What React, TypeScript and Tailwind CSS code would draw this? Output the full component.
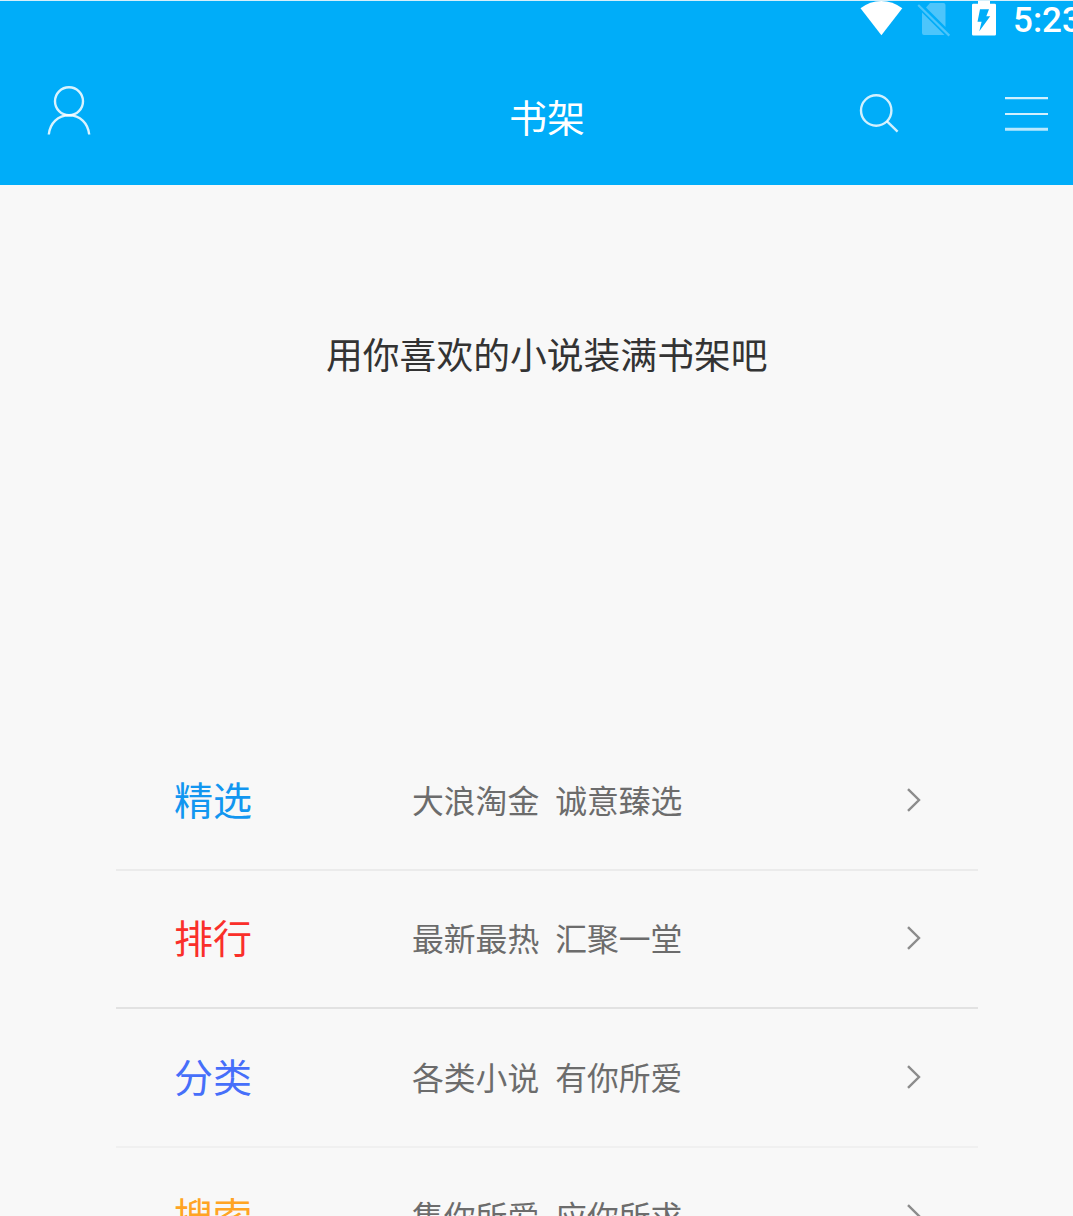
const rows = [
  { label: '精选', color: 'text-[#1296f0]', line: 'border-[#ebebeb]', words: ['大浪淘金', '诚意臻选'], h: 'h-[139px]' },
  { label: '排行', color: 'text-[#fa2f2a]', line: 'border-[#e2e2e2]', words: ['最新最热', '汇聚一堂'], h: 'h-[138px]' },
  { label: '分类', color: 'text-[#466ffa]', line: 'border-[#f0f0f0]', words: ['各类小说', '有你所爱'], h: 'h-[139px]' },
  { label: '搜索', color: 'text-[#ffa424]', line: 'border-[#ebebeb]', words: ['集你所爱', '应你所求'], h: 'h-[139px]' },
];

function StatusBar() {
  return (
    <div className="flex h-[38px] items-start overflow-hidden pl-[860px] font-['Roboto',sans-serif]">
      <svg className="h-[38px] w-[43px] shrink-0" viewBox="0 1 43 38" fill="#fff">
        <path d="M0.5 8.3Q10 1 21.3 1T42.3 8.3L21.4 35.3Z" />
      </svg>
      <svg className="ml-[14px] h-[38px] w-[34px] shrink-0" viewBox="0 1 34 38">
        <path d="M13 3H26.5Q28.5 3 28.5 5V27L9 7.5ZM5 12.5L27.5 35H7Q5 35 5 33Z" fill="#fff" fillOpacity=".3" />
        <path d="M1.2 5L32.3 35.6" stroke="#fff" strokeOpacity=".3" strokeWidth="2.2" />
      </svg>
      <svg className="ml-[20px] h-[38px] w-[26px] shrink-0" viewBox="0 1 26 38">
        <path d="M1 5Q1 3.8 2.2 3.8H7V1H19V3.8H23.8Q25 3.8 25 5V34.2Q25 35.4 23.8 35.4H2.2Q1 35.4 1 34.2Z" fill="#fff" />
        <path d="M9 9.2H18L15.3 16.3H19.2L8.3 31.2L10.6 21.8H6.5Z" fill="#00adf9" />
      </svg>
      <span className="ml-[16px] mt-[2px] shrink-0 whitespace-nowrap text-[35px] font-medium leading-[36px] text-white">5:23</span>
    </div>
  );
}

function Header() {
  return (
    <header className="h-[185px] overflow-hidden border-t border-[#d5effa] bg-[#00adf9]">
      <StatusBar />
      <div className="flex h-[146px] items-start pl-[46px]">
        <svg className="mt-[46px] h-[52px] w-[46px] shrink-0" viewBox="0 0 46 52" fill="none" stroke="#fff" strokeOpacity=".85" strokeWidth="2.4">
          <circle cx="23" cy="16.3" r="14" />
          <path d="M2.8 49.5C4 38 12 30.3 23 30.3S42 38 43.2 49.5" />
        </svg>
        <h1 className="ml-[417px] mt-[49px] shrink-0 text-[38px] font-normal leading-[56px] text-white">书架</h1>
        <svg className="ml-[274px] mt-[54px] h-[42px] w-[42px] shrink-0" viewBox="0 0 42 42" fill="none" stroke="#fff" strokeOpacity=".82" strokeWidth="2.4">
          <circle cx="17.2" cy="17.5" r="15.2" />
          <path d="M27.8 28.2L38.6 38.6" />
        </svg>
        <svg className="ml-[103px] mt-[54px] h-[42px] w-[46px] shrink-0" viewBox="0 0 46 42" stroke="#fff" strokeOpacity=".82">
          <path d="M1 5.2H44M1 21H44" strokeWidth="2.2" />
          <path d="M1 36.2H44" strokeWidth="3" strokeOpacity=".72" />
        </svg>
      </div>
    </header>
  );
}

export default function App() {
  return (
    <div className="h-[1216px] w-[1073px] overflow-hidden bg-[#f8f8f8] font-['Noto_Sans_CJK_SC',sans-serif]">
      <Header />
      <p className="flex h-[547px] items-start pl-[326px] pt-[141px] text-[36.8px] leading-[54px] text-[#333]">
        用你喜欢的小说装满书架吧
      </p>
      <ul className="ml-[116px] w-[862px]">
        {rows.map((row) => (
          <li key={row.label} className={`flex items-center border-b-2 pb-[2px] pl-[58px] ${row.h} ${row.line}`}>
            <span className={`w-[238px] pb-[4px] text-[39px] leading-[56px] ${row.color}`}>{row.label}</span>
            <span className="flex w-[490px] gap-[16px] pb-[2px] text-[31.8px] leading-[48px] text-[#6c6c6c]">
              <span>{row.words[0]}</span>
              <span>{row.words[1]}</span>
            </span>
            <svg className="h-[26px] w-[20px] shrink-0" viewBox="0 0 20 26" fill="none" stroke="#8c8c8c" strokeWidth="2.4">
              <path d="M6 2.2L17 13L6 23.8" />
            </svg>
          </li>
        ))}
      </ul>
    </div>
  );
}
